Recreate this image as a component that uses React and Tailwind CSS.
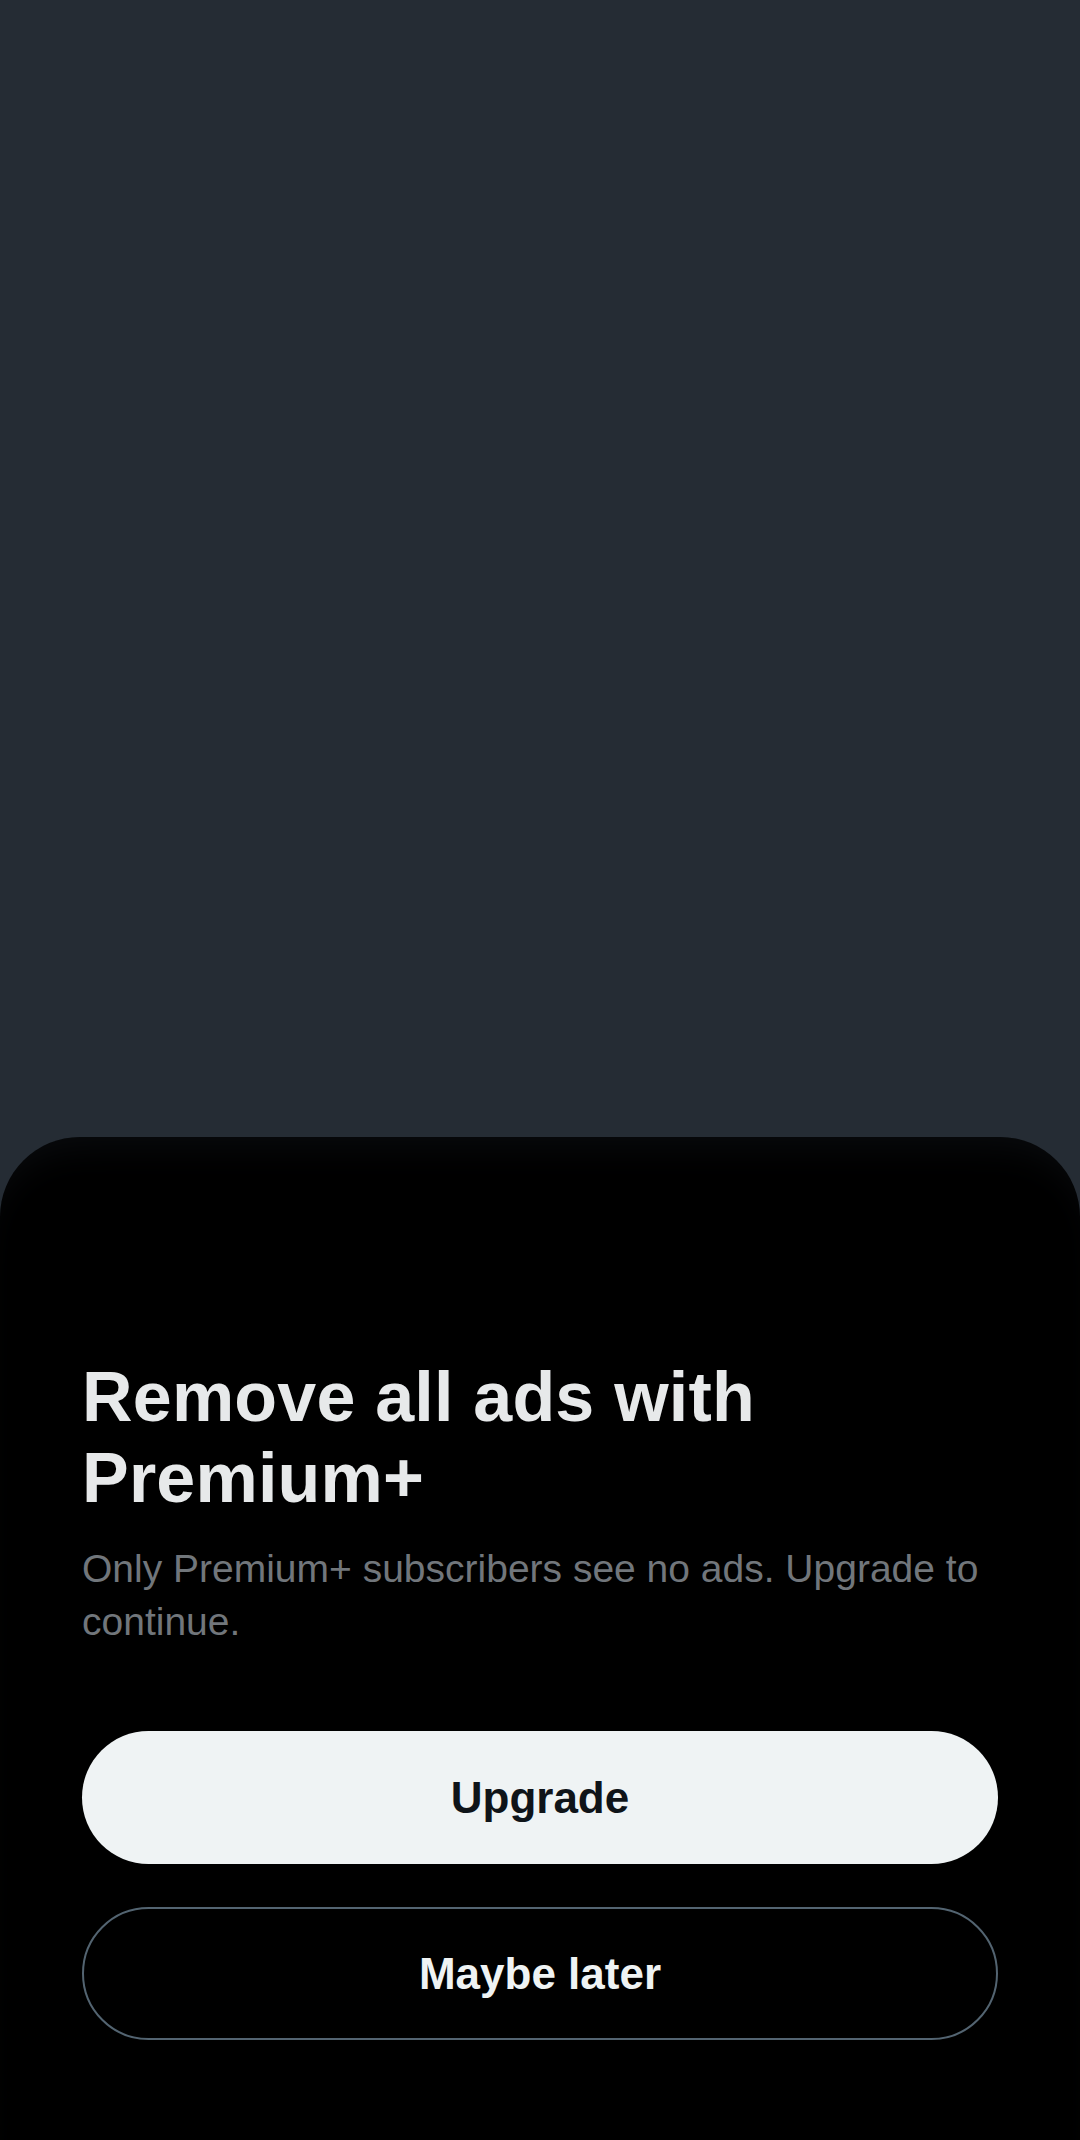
import React from "react";

const App = () => {
  return (
    <div
      className="flex flex-col h-[2140px] w-full bg-[#252c34]"
      style={{ fontFamily: '"Liberation Sans", Arial, sans-serif' }}
    >
      <div className="flex-1" />
      <main className="bg-black rounded-t-[80px] px-[82px] pt-[220px] pb-[100px] shadow-[inset_0_30px_40px_-24px_rgba(37,44,52,0.3)]">
        <h1 className="text-[70px] leading-[81px] font-bold text-[#e7e9ea] tracking-[0.2px]">
          Remove all ads with Premium+
        </h1>
        <p className="mt-[23px] text-[39px] leading-[53px] text-[#71767b]">
          Only Premium+ subscribers see no ads. Upgrade to continue.
        </p>
        <div className="mt-[83px] flex flex-col gap-[43px]">
          <button
            type="button"
            className="h-[133px] w-full rounded-full bg-[#eff3f4] text-[#0f1419] text-[44px] font-bold flex items-center justify-center"
          >
            Upgrade
          </button>
          <button
            type="button"
            className="h-[133px] w-full rounded-full border-2 border-[#536471] text-[#eff3f4] text-[44px] font-bold flex items-center justify-center"
          >
            Maybe later
          </button>
        </div>
      </main>
    </div>
  );
};

export default App;
